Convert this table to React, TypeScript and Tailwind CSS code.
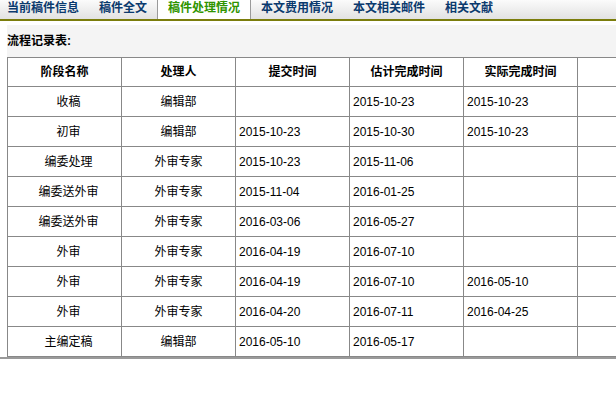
import React from "react";

const tabs = ["当前稿件信息", "稿件全文", "稿件处理情况", "本文费用情况", "本文相关邮件", "相关文献"];

const rows: [string, string, string, string, string][] = [
  ["收稿", "编辑部", "", "2015-10-23", "2015-10-23"],
  ["初审", "编辑部", "2015-10-23", "2015-10-30", "2015-10-23"],
  ["编委处理", "外审专家", "2015-10-23", "2015-11-06", ""],
  ["编委送外审", "外审专家", "2015-11-04", "2016-01-25", ""],
  ["编委送外审", "外审专家", "2016-03-06", "2016-05-27", ""],
  ["外审", "外审专家", "2016-04-19", "2016-07-10", ""],
  ["外审", "外审专家", "2016-04-19", "2016-07-10", "2016-05-10"],
  ["外审", "外审专家", "2016-04-20", "2016-07-11", "2016-04-25"],
  ["主编定稿", "编辑部", "2016-05-10", "2016-05-17", ""],
];

const headers = ["阶段名称", "处理人", "提交时间", "估计完成时间", "实际完成时间", ""];

export default function App() {
  return (
    <div
      className="w-[616px] h-[398px] overflow-hidden bg-white text-black"
      style={{ fontFamily: "'Liberation Sans', 'Noto Sans CJK SC', sans-serif" }}
    >
      {/* Tab bar */}
      <div className="h-[19px] flex bg-gradient-to-b from-[#fbfbfb] to-[#e2e2e2]">
        <div className="flex ml-[-3px]">
          {tabs.map((t, i) =>
            i === 2 ? (
              <div
                key={t}
                className="h-[19px] px-[10px] bg-white border-x border-[#9a9a9a] text-[12px] leading-[17px] font-bold text-[#2f9400]"
              >
                {t}
              </div>
            ) : (
              <div
                key={t}
                className="h-[19px] px-[10px] text-[12px] leading-[17px] font-bold text-[#0b3a6e]"
              >
                {t}
              </div>
            )
          )}
        </div>
      </div>
      <div className="h-[2px] bg-[#7b7d0c]" />
      {/* Content */}
      <div className="mt-[4px] pl-[7px] border-b-2 border-[#9a9a9a]">
        <div className="bg-[#f4f4f4]">
          <div className="h-[32px] flex items-center text-[12px] font-bold">流程记录表:</div>
          <table className="table-fixed border-collapse bg-white w-[685px] text-[12px]">
            <tbody>
              <tr className="h-[29px]">
                {headers.map((h, i) => (
                  <td
                    key={i}
                    className="w-[114px] border border-[#888] text-center font-bold p-0"
                  >
                    {h}
                  </td>
                ))}
              </tr>
              {rows.map((r, ri) => (
                <tr key={ri} className="h-[30px]">
                  <td className="border border-[#888] text-center pl-[8px] pr-0 py-0">{r[0]}</td>
                  <td className="border border-[#888] text-center p-0">{r[1]}</td>
                  <td className="border border-[#888] text-left pl-[3px] pr-0 py-0">{r[2]}</td>
                  <td className="border border-[#888] text-left pl-[3px] pr-0 py-0">{r[3]}</td>
                  <td className="border border-[#888] text-left pl-[3px] pr-0 py-0">{r[4]}</td>
                  <td className="border border-[#888] p-0"></td>
                </tr>
              ))}
            </tbody>
          </table>
        </div>
      </div>
    </div>
  );
}
